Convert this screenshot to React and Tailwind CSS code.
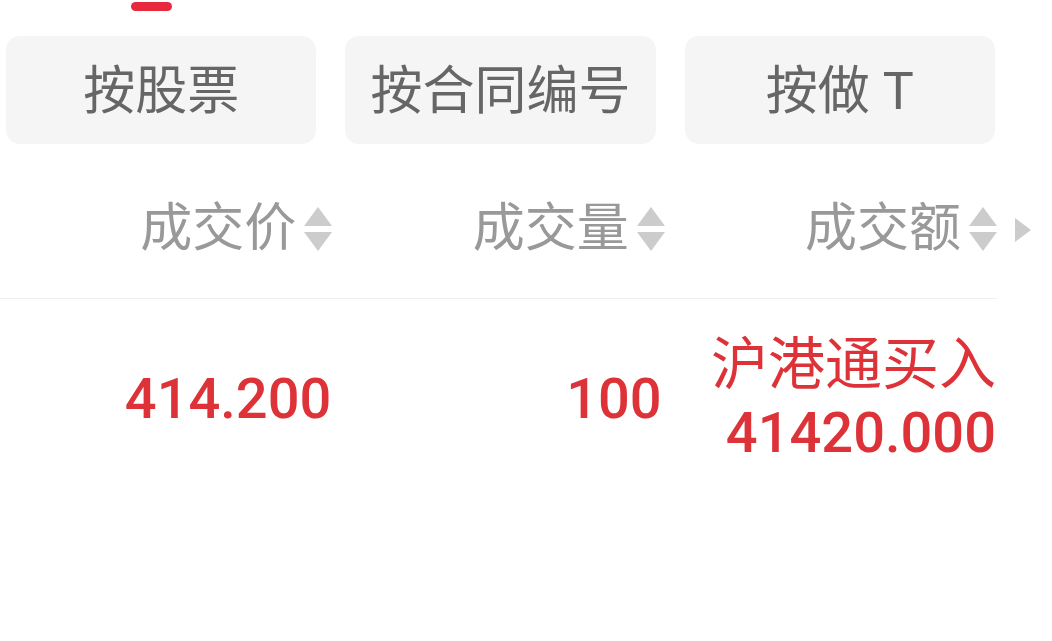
import React from 'react';

const cjk = { fontFamily: 'Roboto, "Noto Sans CJK SC", sans-serif' };

const tabs = ['按股票', '按合同编号', '按做 T'];

function SortIcon() {
  return (
    <span className="ml-[8px] flex flex-col items-center gap-[6px]">
      <svg width="28" height="19" viewBox="0 0 28 19"><polygon points="14,0 28,19 0,19" fill="#cccccc" /></svg>
      <svg width="28" height="19" viewBox="0 0 28 19"><polygon points="0,0 28,0 14,19" fill="#cccccc" /></svg>
    </span>
  );
}

export default function App() {
  return (
    <div className="w-[1052px] h-[641px] bg-white overflow-hidden" style={cjk}>
      <div className="mt-[2px] ml-[131px] h-[9px] w-[41px] rounded-full bg-[#e8283c]" />

      <div className="mt-[25px] ml-[6px] w-[989px] flex gap-[29px]">
        {tabs.map((t) => (
          <div key={t} className="flex-1 h-[108px] pt-[4px] rounded-[14px] bg-[#f5f5f5] flex items-center justify-center text-[52px] text-[#666666] whitespace-pre">
            {t}
          </div>
        ))}
      </div>

      <div className="relative h-[155px] w-[997px] pt-[16px] grid grid-cols-3 items-center border-b border-[#eeeeee] text-[52px] text-[#999999]">
        {['成交价', '成交量', '成交额'].map((h) => (
          <div key={h} className="flex items-center justify-end">
            <span className="leading-none">{h}</span>
            <SortIcon />
          </div>
        ))}
        <svg className="absolute left-[1015px] top-[74px]" width="16" height="24" viewBox="0 0 16 24">
          <polygon points="0,0 16,12 0,24" fill="#cccccc" />
        </svg>
      </div>

      <div className="w-[997px] pt-[32px] grid grid-cols-3 items-center text-[56px] font-medium text-[#dd3238]">
        <div className="text-right pr-[1px] leading-[68px]">414.200</div>
        <div className="text-right pr-[3px] leading-[68px]">100</div>
        <div className="text-right pr-[1px] leading-[68px]">
          <div className="text-[57px] font-normal">沪港通买入</div>
          <div>41420.000</div>
        </div>
      </div>
    </div>
  );
}
